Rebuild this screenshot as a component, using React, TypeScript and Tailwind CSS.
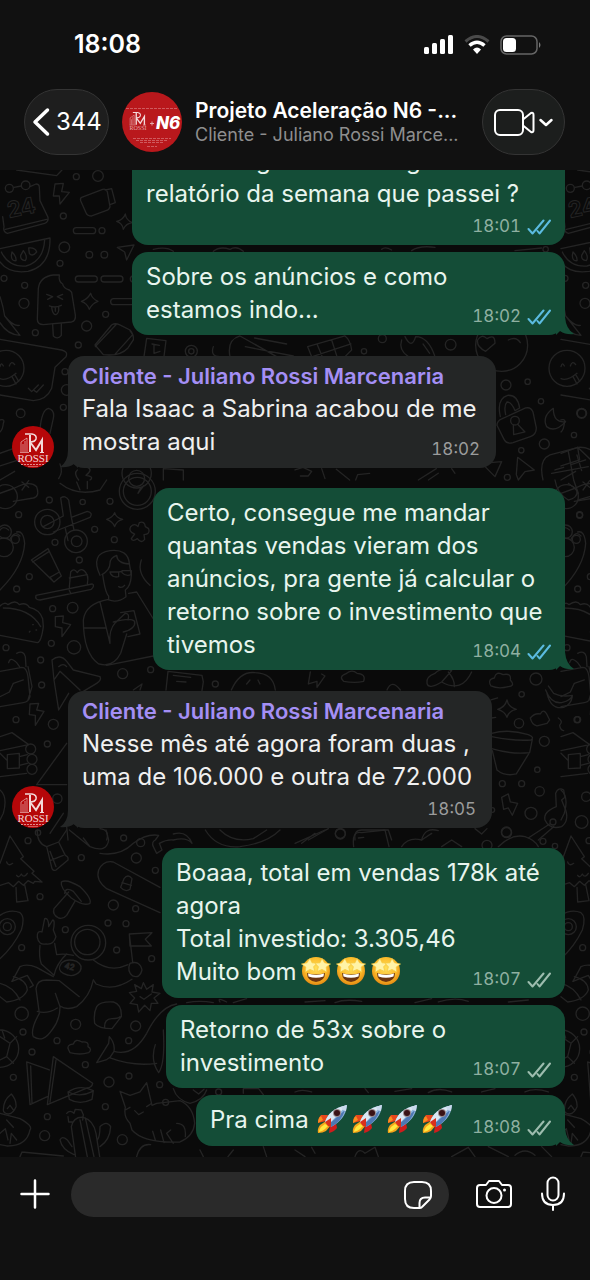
import type { ReactNode } from "react";

type Doodle = {
  x: number;
  y: number;
  dots: [number, number, number][];
  paths: string[];
};

type Message = {
  id: number;
  from: "me" | "client";
  lines: ReactNode[];
  time: string;
  status?: "read" | "delivered";
  // time goes on its own row instead of beside the last line
  timeBelow?: boolean;
  tail?: boolean;
  width: string;
  gap: string;
};

// wallpaper sketches, drawn at 3x
const DOODLES: Doodle[] = [
  {
    x: 0,
    y: 160,
    dots: [
      [229, 50, 9], [294, 48, 16], [190, 168, 9], [306, 212, 9], [193, 262, 16], [180, 310, 9],
      [268, 284, 10], [313, 284, 10], [12, 355, 9], [74, 376, 9], [72, 430, 15], [317, 463, 9],
      [260, 498, 15], [106, 518, 9], [235, 555, 9], [62, 760, 13], [190, 742, 9], [28, 85, 12],
      [77, 76, 13], [18, 625, 54], [574, 574, 18], [574, 574, 8], [410, 940, 44], [410, 955, 24],
      [195, 635, 9], [200, 690, 16],
    ],
    paths: [
      "M50 30L170 47L186 30",
      "M42 82L64 78M90 80L108 72Q118 72 118 82L120 122L144 172Q146 186 134 190L22 220Q8 216 12 200L8 170M16 208L140 178",
      "M165 72L190 70L185 95L208 97L180 132L178 108L160 108Z",
      "M245 112L308 88Q318 85 322 95L330 140Q328 150 318 152L275 168Q262 168 258 158L242 122Q240 114 245 112ZM316 90L335 86L346 128L330 134",
      "M376 162Q378 180 397 188Q378 190 370 208Q368 190 350 184Q370 180 376 162Z",
      "M229 203H278A9 9 0 0 1 278 221H229A9 9 0 0 1 229 203ZM235 348H283A9 9 0 0 1 283 366H235A9 9 0 0 1 235 348ZM312 348H360A9 9 0 0 1 360 366H312A9 9 0 0 1 312 348ZM400 348A9 9 0 0 0 400 366M400 416H341A9 9 0 0 0 341 434H400",
      "M0 266L150 234Q152 318 84 334Q26 342 0 306M134 240Q130 304 78 318Q26 322 4 276",
      "M36 276Q50 290 48 302Q34 304 34 286ZM70 272Q84 290 76 302Q60 300 62 286ZM86 264Q106 262 110 276Q96 292 88 280Z",
      "M352 262L402 255L380 300L374 276Z",
      "M112 478L115 385Q120 350 160 345L178 345Q175 365 188 372Q190 385 208 390L215 397L226 465Q228 482 215 486L130 494Q112 494 112 478ZM158 494L160 528Q172 540 184 526L184 492",
      "M140 403L158 410L143 418M188 403L172 410L188 418M148 438Q165 445 184 436M155 442Q158 465 168 464Q178 460 176 440M166 443V454",
      "M272 400Q276 416 294 424Q276 430 268 448Q262 430 244 424Q262 418 272 400Z",
      "M0 410Q10 440 14 468L60 526Q22 524 0 488M14 468Q40 500 58 496",
      "M285 555L335 495Q345 488 358 494L390 510Q402 524 400 540L384 564Q360 590 310 584ZM390 512L398 524L344 584M350 492L286 560",
      "M0 538L185 570Q205 575 198 590L165 622L155 685Q140 720 100 722L0 705",
      "M0 620Q4 604 10 618M28 618Q34 600 44 614M0 656Q20 664 48 640M36 650L48 672M44 644L56 664",
      "M85 685L95 695L115 675M103 692L110 697L130 675",
      "M432 590L440 535L498 542L492 590M456 552L478 556M462 554V580L480 574",
      "M120 808Q125 750 145 745Q165 750 160 775L150 820M0 780Q16 776 10 790Q8 810 0 816",
      "M0 880L50 862L56 900L0 918M50 862L90 900M0 960L44 934",
      "M180 912Q190 936 176 956M232 930Q220 940 236 960M262 922Q280 928 258 946Q284 950 270 960M490 960V926L550 930V960",
      "M640 560Q630 590 660 590M690 590Q680 540 720 528L830 590M736 560L880 588M764 534L860 552",
      "M460 268Q500 258 520 274M640 274Q660 258 690 268Q710 256 730 274",
    ],
  },
  {
    x: 295,
    y: 160,
    dots: [
      [467, 554, 16], [207, 574, 8], [262, 536, 12], [633, 675, 15], [698, 665, 8], [738, 724, 8],
      [860, 760, 15], [837, 825, 8], [748, 852, 15], [679, 871, 8], [637, 952, 9], [660, 782, 13],
      [620, 556, 78], [752, 268, 8],
    ],
    paths: [
      "M38 560L150 528Q166 540 170 570L150 590M38 560L50 590M66 552L82 590M110 540L126 590M52 590L168 552",
      "M320 540Q310 570 340 590M330 530Q350 570 362 530Q400 530 420 590M384 552L404 580",
      "M548 540Q560 520 576 536Q600 520 600 550L572 574Q544 560 548 540ZM640 540Q664 528 676 548",
      "M606 796Q606 782 622 776L692 744Q708 740 714 756L724 804Q724 824 706 830L654 848Q634 854 626 836ZM616 770Q604 716 638 706Q668 704 674 744L660 752Q650 726 636 726Q626 736 632 764",
      "M655 795L656 824L690 816L668 793",
      "M775 745Q740 770 755 800Q780 820 812 785Q775 790 775 745Z",
      "M744 960Q730 900 765 885L850 862Q880 860 900 880M846 885L860 932M828 914L872 900M780 930L806 922M820 874L836 960M770 940L880 920",
      "M668 892L718 930L690 935L670 960L664 944Z",
      "M560 910L620 905L600 950Z",
      "M0 930L24 922L50 934L40 948L16 948M80 926L90 956M124 928L164 960M182 960L188 944L224 940M370 960L424 926M400 960L430 940M470 926L480 940",
      "M260 268Q270 258 290 270M350 272Q372 256 420 262M660 272L740 264",
    ],
  },
  {
    x: 0,
    y: 480,
    dots: [
      [148, 60, 9], [248, 66, 8], [330, 64, 9], [56, 104, 9], [142, 126, 38], [142, 126, 20],
      [228, 184, 34], [230, 184, 16], [284, 148, 9], [165, 187, 9], [343, 179, 9], [238, 240, 9],
      [88, 290, 9], [50, 327, 9], [158, 386, 9], [218, 383, 16], [154, 490, 9], [222, 502, 20],
      [18, 503, 9], [122, 540, 9], [368, 581, 15], [452, 569, 9], [125, 615, 9], [48, 719, 9],
      [160, 733, 15], [142, 792, 9], [92, 807, 15], [96, 838, 15], [96, 868, 15], [412, 34, 54],
      [412, 34, 42], [14, 155, 20], [46, 178, 12], [12, 202, 28], [646, 612, 9], [172, 956, 14],
      [16, 50, 36], [114, 1058, 8], [136, 1008, 8],
    ],
    paths: [
      "M182 54Q196 44 206 60L214 112L262 94Q280 98 270 112L160 156M182 54L190 108L130 140M196 146L204 182M214 112L222 150",
      "M344 98Q348 114 368 118Q350 122 344 140Q338 124 320 118Q338 112 344 98Z",
      "M392 140Q404 128 414 140L418 128Q434 122 436 140L446 146Q452 162 432 164L434 178Q424 192 412 176Q398 186 394 176L404 162Q384 154 392 140Z",
      "M94 240L144 206L184 288L162 306ZM98 246L148 214M158 302L150 292L178 276",
      "M108 346L276 312Q286 316 274 328L120 360Q104 360 108 346ZM208 322L212 276Q222 262 232 278Q240 264 252 272Q268 284 262 312M208 294L262 284M206 326L212 340",
      "M300 286Q270 220 330 212Q384 206 388 250L394 286Q392 320 376 330L378 350M308 284Q316 340 326 348L326 360Q352 370 378 350M306 284Q330 270 330 250Q330 234 350 226Q352 250 388 252",
      "M330 276H356V290Q340 294 332 282ZM366 272H394V284Q376 290 366 278ZM356 276L366 274M356 320Q366 326 374 316",
      "M326 358Q256 370 250 420Q250 520 296 552Q340 564 362 520L380 462M252 444H316M300 366L330 490Q326 450 346 428L376 400Q390 400 384 420M386 340L410 336L462 420M362 398L402 392L420 462L384 470M340 426Q392 412 404 424Q408 446 370 456M320 556L460 528M424 240Q410 280 450 316",
      "M0 330Q70 260 74 190Q70 150 50 156M26 150Q10 136 0 150M30 178Q44 150 60 168",
      "M0 378Q14 364 24 374Q46 358 58 374Q78 366 88 382Q118 388 128 416L130 440Q124 486 112 488L0 466M10 384Q90 384 122 440M88 456L90 454M98 434L100 434M108 450L110 450",
      "M166 410L190 408L188 428L212 434L186 470L186 444L166 440Z",
      "M0 574L66 562Q80 562 84 590L90 650Q86 666 70 668L0 680M26 548Q30 528 50 548L60 562M50 520Q70 510 76 530L78 560M0 650L28 636L40 610L70 600M84 560L96 620L84 660",
      "M156 540Q180 520 200 544L220 570L300 590Q306 600 290 610L240 640M156 540L162 600L176 690L206 640M176 560Q190 548 200 560M162 600L180 574L240 630",
      "M90 672L116 670L110 690L132 694L106 736L106 706L88 704Z",
      "M0 770L36 758L86 794L0 812M22 824L58 820V864L22 866ZM0 820L20 840M58 830L82 824M58 856L82 850M0 890L80 880",
      "M110 914L200 790M110 914H200M400 630L426 612L420 630",
      "M498 630L504 574L606 586L610 606L606 632M520 586L572 592M530 604L558 606",
      "M694 630Q720 572 766 578Q820 580 826 630M740 612L750 600M780 612L774 600",
      "M0 40L44 24Q90 0 110 20Q120 50 100 54L40 64M66 6L86 22M86 2L66 30M180 10Q230 50 300 30L320 0M230 6L240 30M262 4L262 26M420 28L432 16L414 40Z",
      "M0 930Q24 950 10 1000L0 1020M190 1000L150 1060M200 1040L204 1080M300 1046Q330 1050 320 1080",
    ],
  },
  {
    x: 295,
    y: 480,
    dots: [
      [723, 597, 18], [680, 643, 8], [672, 730, 14], [848, 719, 9], [748, 784, 15], [727, 869, 8],
      [622, 911, 9], [680, 911, 9], [734, 934, 14], [708, 1000, 18], [860, 1026, 19], [874, 950, 14],
      [634, 1056, 15], [592, 990, 7], [854, 106, 9], [774, 1026, 9], [136, 1060, 15],
    ],
    paths: [
      "M46 576L40 612L66 604L66 622L90 588L80 582M146 604Q130 590 152 582Q170 566 186 580Q214 582 206 604Q180 610 146 604ZM276 630Q290 596 316 630",
      "M396 610Q392 590 420 580Q440 560 470 572L440 606Q400 630 396 610ZM440 606Q500 640 530 576M460 576Q480 600 478 620",
      "M588 618Q576 598 598 594Q604 572 624 584Q650 578 646 600Q662 618 640 620Q610 628 588 618Z",
      "M636 660Q640 682 664 688Q642 692 636 712Q630 694 608 688Q630 682 636 660ZM588 660L608 654M590 714L602 712",
      "M706 714Q720 698 736 702Q744 686 754 700L764 720L756 730L726 738Q710 734 706 714Z",
      "M752 630Q768 672 800 668Q830 660 832 646Q800 652 776 640L760 618M756 640Q768 690 806 682Q828 674 832 650",
      "M790 714Q806 724 794 736Q796 750 806 752",
      "M590 760Q640 746 700 764Q720 772 708 780Q660 784 590 770M590 806Q650 824 704 818L712 778M592 812L606 870Q630 890 664 882L702 820",
      "M620 952L640 942L646 966L668 970L652 1006L640 984L626 988Z",
      "M784 980L782 940Q790 920 806 930L810 952L800 960L808 980Q826 1020 800 1040Q764 1050 750 1020Q744 996 784 980ZM776 1040L730 1080M764 1032L700 1074",
      "M780 0Q786 40 820 60Q850 54 846 30L820 10M836 0L850 40M850 60L884 50",
      "M40 1080L100 1046M180 1080Q176 1050 200 1050H280L290 1080M380 1080Q390 1040 430 1052M540 1046L560 1062L576 1046",
    ],
  },
  {
    x: 0,
    y: 830,
    dots: [
      [84, 32, 9], [244, 83, 9], [371, 24, 9], [422, 38, 12], [409, 84, 15], [466, 121, 9],
      [120, 200, 9], [340, 225, 15], [407, 236, 9], [324, 279, 9], [378, 281, 9], [196, 299, 9],
      [22, 290, 24], [22, 290, 12], [65, 353, 9], [350, 360, 9], [455, 386, 9], [65, 551, 20],
      [227, 583, 15], [407, 588, 15], [69, 606, 9], [171, 632, 9], [386, 632, 9], [96, 666, 9],
      [256, 704, 9], [40, 742, 9], [327, 756, 15], [387, 738, 9], [479, 764, 9], [316, 830, 9],
      [142, 860, 9], [134, 917, 15], [367, 929, 15], [497, 817, 9], [265, 338, 52], [262, 336, 38],
      [0, 656, 56], [656, 786, 9],
    ],
    paths: [
      "M30 18L70 80L62 86L102 124L96 130L126 156L104 154L100 160L84 152L70 166L56 154L40 170L26 158L0 166M30 18L0 100M48 172L50 216L84 212L74 164M20 96Q24 110 38 100M50 136Q56 146 64 132Q72 146 82 130",
      "M112 0Q110 40 140 50L156 116Q160 124 168 120L204 90Q206 80 196 76L176 36M140 50L176 36L200 0M150 92L190 76M150 64L168 110",
      "M208 0L270 50Q320 70 326 30L318 0M270 50L250 24M300 70Q360 80 400 40Q440 10 476 16L466 30Q454 36 460 50L470 70L486 60L478 40Q500 28 520 30Q560 20 576 40Q560 0 520 12",
      "M480 172L340 96Q310 90 296 120Q286 150 320 176L480 248M372 146Q384 130 396 146L390 178Q376 188 362 172ZM366 158L394 166",
      "M184 156Q200 146 240 170Q276 204 270 220Q250 230 214 204Q180 174 184 156ZM206 186L162 236Q156 254 176 264Q190 268 200 256L226 212M194 190Q196 170 220 184L244 214",
      "M0 256Q30 236 60 248Q76 260 64 300Q40 350 0 386",
      "M112 322Q110 300 126 306L134 266Q146 262 146 290L158 270Q166 270 160 300L168 320Q160 346 138 342Q116 346 112 322ZM120 346Q116 380 124 402L162 436Q170 400 200 372M164 340L170 374Q190 370 220 376M36 454L60 410Q80 400 110 412L160 440",
      "M184 400Q200 384 230 394Q250 406 240 424Q220 446 190 430Q170 420 184 400ZM280 390Q330 430 384 404M280 450L288 462Q340 486 396 448",
      "M388 312L456 308L436 328L454 348L390 348ZM388 312L398 396M390 400Q420 390 426 420Q420 446 398 438Q380 424 390 400",
      "M108 476Q110 450 140 450L178 452L238 500M108 476L118 550Q90 600 100 620Q130 640 156 600Q180 570 180 530L166 490M112 544Q140 554 172 534M280 450Q270 500 230 530Q200 542 180 528M36 454L82 436L100 466L90 472M40 440Q80 450 82 480Q70 510 20 516L0 500M0 460Q40 470 60 510",
      "M430 458L440 478L460 464L456 486L480 490L462 504L474 520L454 520L450 542L434 526L416 546L412 524L390 520L404 504L388 488L410 484L404 464L424 476ZM420 500L432 508L454 492",
      "M290 530Q300 514 340 516Q366 524 364 560L336 596Q296 596 284 580Q280 550 290 530ZM314 594Q312 566 336 566Q356 566 360 560",
      "M206 660Q198 644 220 642Q226 624 246 636Q268 634 264 650Q278 658 266 668Q240 676 210 668Z",
      "M0 620L30 640L20 680L0 690M30 640L50 620M20 680L40 700M6 600L14 624",
      "M290 698L326 640L328 620Q346 640 342 664L330 682L318 690ZM342 664Q400 680 440 610Q480 530 530 522M330 684Q400 710 470 700M466 644Q450 690 476 728Q496 700 490 600",
      "M80 696L90 824L142 800M80 696L148 720M92 708L96 820M160 680L278 760Q276 772 262 774L142 824L160 680ZM150 816L168 690",
      "M204 786Q240 762 280 782L276 808Q240 826 208 808ZM204 786Q240 804 278 784",
      "M10 840Q10 810 34 792Q50 810 48 830Q40 850 26 852Q10 850 10 840ZM22 836L30 826L40 840M0 850L60 866Q100 888 90 900Q80 950 20 948L0 944M20 870L40 892M0 910L16 896L24 930M30 940L34 910L50 930",
      "M360 784L376 832Q370 860 390 880L396 900Q430 940 540 936Q580 920 584 880Q580 830 540 812L470 820L456 826L440 758L420 786L390 796ZM376 840L390 832M430 846L416 854L404 842M440 830L452 822M458 904L466 930M482 900L492 938M512 900L500 910L520 940M530 880Q560 880 556 920M452 944Q420 940 410 980",
      "M200 850Q210 838 222 850L226 838L244 840L250 854L248 870M228 990L214 890Q220 860 250 862Q280 870 288 910L300 986M240 870L262 980M256 864L282 980M204 860L206 876L216 876M180 930Q186 916 202 930L216 950M180 930Q186 960 222 974M292 930Q300 920 300 890Q320 870 332 890Q330 930 300 950",
      "M66 966L190 978M66 966L60 980M520 776Q530 810 570 820Q610 810 620 780M580 780L596 792L612 778M730 790V776L776 776L790 794M600 960L610 980M700 960L684 980M790 950L800 980",
      "M560 518Q600 510 640 518M660 516Q650 500 680 516M700 518L740 506M616 0Q650 56 720 50Q800 40 840 0M660 0Q700 40 760 26L800 0",
    ],
  },
  {
    x: 295,
    y: 830,
    dots: [[136, 12, 15], [576, 46, 15], [635, 8, 15], [744, 34, 9], [780, 48, 8]],
    paths: [
      "M0 40L90 0M20 40L60 10M176 50Q170 0 200 8L270 0L282 50M190 24L206 22M320 50Q340 20 380 30L410 10M440 50L470 30L500 50M610 50Q650 10 690 20Q720 30 730 50",
      "M30 516L90 512M120 518Q150 506 200 514M360 518L410 506M430 516Q480 500 520 514M640 516L700 510",
      "M0 786Q20 776 50 786M210 776L220 788M300 784L350 776M400 788Q430 770 470 786M560 786L600 776M690 786Q720 772 760 786",
      "M0 960L30 980M60 970L50 952M180 980Q190 950 210 970L240 952L250 980M470 980L520 952L540 980M580 950L640 980M660 976Q690 950 720 976M740 950L770 980",
    ],
  },
];

const MESSAGES: Message[] = [
  {
    id: 1,
    from: "me",
    lines: ["Ele conseguiu avaliar agora o", "relatório da semana que passei ?"],
    time: "18:01",
    status: "read",
    timeBelow: true,
    width: "w-[433px]",
    gap: "mt-0",
  },
  {
    id: 2,
    from: "me",
    lines: ["Sobre os anúncios e como", "estamos indo..."],
    time: "18:02",
    status: "read",
    tail: true,
    width: "w-[433px]",
    gap: "mt-[7px]",
  },
  {
    id: 3,
    from: "client",
    lines: ["Fala Isaac a Sabrina acabou de me", "mostra aqui"],
    time: "18:02",
    width: "w-[428px]",
    gap: "mt-[21px]",
  },
  {
    id: 4,
    from: "me",
    lines: [
      "Certo, consegue me mandar",
      "quantas vendas vieram dos",
      "anúncios, pra gente já calcular o",
      "retorno sobre o investimento que",
      "tivemos",
    ],
    time: "18:04",
    status: "read",
    tail: true,
    width: "w-[412px]",
    gap: "mt-5",
  },
  {
    id: 5,
    from: "client",
    lines: ["Nesse mês até agora foram duas ,", "uma de 106.000 e outra de 72.000"],
    time: "18:05",
    timeBelow: true,
    width: "w-[424px]",
    gap: "mt-[21px]",
  },
  {
    id: 6,
    from: "me",
    lines: [
      "Boaaa, total em vendas 178k até",
      "agora",
      "Total investido: 3.305,46",
      <>
        Muito bom
        <EmojiRow kind="star" count={3} />
      </>,
    ],
    time: "18:07",
    status: "delivered",
    width: "w-[403px]",
    gap: "mt-5",
  },
  {
    id: 7,
    from: "me",
    lines: ["Retorno de 53x sobre o", "investimento"],
    time: "18:07",
    status: "delivered",
    width: "w-[399px]",
    gap: "mt-[7px]",
  },
  {
    id: 8,
    from: "me",
    lines: [
      <>
        Pra cima <EmojiRow kind="rocket" count={4} />
      </>,
    ],
    time: "18:08",
    status: "delivered",
    tail: true,
    width: "w-[369px]",
    gap: "mt-[7px]",
  },
];

function StarStruck() {
  return (
    <svg viewBox="0 0 30 30" className="h-[30px] w-[30px]" role="img" aria-label="🤩">
      <defs>
        <radialGradient id="face" cx="50%" cy="40%" r="60%">
          <stop offset="0" stopColor="#ffe15a" />
          <stop offset="0.65" stopColor="#fbb928" />
          <stop offset="1" stopColor="#e48a13" />
        </radialGradient>
      </defs>
      <circle cx="15" cy="15" r="14" fill="url(#face)" />
      <path d="M6 17Q15 20 24 17Q24 25 15 26Q6 25 6 17Z" fill="#6b3410" />
      <path d="M7 17.600Q15 20.500 23 17.600L22.500 20.500Q15 23 7.500 20.500Z" fill="#fff" />
      <path
        d="M9 2.500L11 6.800L16 7.200L12.600 10.800L13.800 15.500L9 13.400L4.300 16L4.800 11L0.500 8L6 6.800Z"
        fill="#fff3a6"
        stroke="#f7c83c"
        strokeWidth="0.700"
      />
      <path
        d="M21 2.500L23.500 6.800L29.500 8L25.200 11L25.700 16L21 13.400L16.200 15.500L17.400 10.800L14 7.200L19 6.800Z"
        fill="#fff3a6"
        stroke="#f7c83c"
        strokeWidth="0.700"
      />
    </svg>
  );
}

function Rocket() {
  return (
    <svg viewBox="0 0 32 30" className="h-[30px] w-8" role="img" aria-label="🚀">
      <path d="M11 11L4 11Q1 14 1 19L9 17Z" fill="#e8461c" />
      <path d="M4 12Q1 14 1 19L6 16Z" fill="#f98d1f" />
      <path d="M19 19L20 24Q17 28 12 29L13 21Z" fill="#cf1d1d" />
      <path d="M9 17L3 21Q0 25 1 29Q6 29 9 27L14 21Z" fill="#f6a31a" />
      <path d="M8 20L4 23Q2 26 2 28Q6 27 8 25L11 22Z" fill="#ffe93f" />
      <path d="M8 18Q12 5 30 1Q29 15 14 23Z" fill="#8fb4dc" />
      <path d="M8 18Q12 5 30 1L12 20Z" fill="#dbe7f3" />
      <path d="M11 21L28 6Q25 17 14 23Z" fill="#4d78b4" />
      <path d="M24 3L30 1L29 7Q26 7 24 3Z" fill="#c9d9ec" />
      <circle cx="20" cy="9" r="4" fill="#9a8a8c" />
      <circle cx="20" cy="9" r="3" fill="#3a1216" />
      <path d="M8 18L14 14L14 23L11 22Z" fill="#d9301c" />
    </svg>
  );
}

function EmojiRow({ kind, count }: { kind: "star" | "rocket"; count: number }) {
  return (
    <span className={`inline-flex h-[34px] items-start align-middle ${kind === "star" ? "gap-[5px] pl-1" : "gap-[3px] pl-0.5"}`}>
      {Array.from({ length: count }, (_, i) => (kind === "star" ? <StarStruck key={i} /> : <Rocket key={i} />))}
    </span>
  );
}

function Wallpaper() {
  return (
    <svg
      className="absolute bottom-0 left-0 h-[988px] w-full"
      viewBox="0 169 590 988"
      preserveAspectRatio="xMinYMin slice"
      aria-hidden="true"
    >
      <g id="doodles" fill="none" stroke="#242424" strokeLinejoin="round" strokeLinecap="round">
        {DOODLES.map((d, i) => (
          <g key={i} transform={`translate(${d.x} ${d.y}) scale(0.3333)`} strokeWidth="4">
            {d.dots.map(([cx, cy, r], n) => (
              <circle key={n} cx={cx} cy={cy} r={r} />
            ))}
            {d.paths.map((p) => (
              <path key={p} d={p} />
            ))}
          </g>
        ))}
        <text x="9" y="218" fontSize="22" fontWeight="700" transform="rotate(-12 9 218)" fontFamily="Inter, sans-serif">
          24
        </text>
        <text x="64" y="968" fontSize="8" transform="rotate(14 64 968)" fontFamily="Inter, sans-serif">
          42
        </text>
      </g>
      <use href="#doodles" x="561" />
    </svg>
  );
}

function Checks({ read }: { read: boolean }) {
  return (
    <svg viewBox="0 0 24 16" className={`h-4 w-6 ${read ? "text-[#5bbbe0]" : "text-[#9dbcae]"}`} role="img" aria-label={read ? "Lida" : "Entregue"}>
      <path
        d="M1.500 10L5.500 14.500L16.500 1.500M10.500 12L12.500 14.500L23 1.500"
        fill="none"
        stroke="currentColor"
        strokeWidth="2"
        strokeLinecap="round"
        strokeLinejoin="round"
      />
    </svg>
  );
}

function RossiMark() {
  return (
    <g fill="none" stroke="#f3d9d9">
      <path d="M9 26V16L15 12V26M11 26V18M13 26V15M8 26.500H17" strokeWidth="1" opacity="0.600" />
      <path d="M13 8H20Q25 9 24 13Q23 16 18 16" strokeWidth="1.600" />
      <path d="M18 9V26M18 16L24 24L30 14V26" strokeWidth="2" />
      <path d="M28 26.500H32" strokeWidth="1" />
    </g>
  );
}

function ClientAvatar() {
  return (
    <svg viewBox="0 0 42 42" className="h-[42px] w-[42px] shrink-0" role="img" aria-label="Rossi Marcenaria">
      <circle cx="21" cy="21" r="21" fill="#b50709" />
      <RossiMark />
      <text x="21" y="36" textAnchor="middle" fontSize="11" fill="#f3d9d9" fontFamily="Liberation Serif, serif">
        ROSSI
      </text>
      <path d="M9 38.500H33" stroke="#e08b8b" strokeWidth="1" strokeDasharray="2 1" />
      <path d="M16 40.500H26" stroke="#d15a5a" strokeWidth="1" />
    </svg>
  );
}

function GroupAvatar() {
  return (
    <svg viewBox="0 0 60 60" className="h-[60px] w-[60px] shrink-0" role="img" aria-label="Grupo">
      <circle cx="30" cy="30" r="30" fill="#b9181c" />
      <path d="M4 16.500H56" stroke="#d9777a" strokeWidth="1" strokeDasharray="3 1" opacity="0.700" />
      <g transform="translate(2 15) scale(0.68)">
        <RossiMark />
      </g>
      <text x="16" y="38" textAnchor="middle" fontSize="6" fill="#e3a9aa" fontFamily="Liberation Serif, serif">
        ROSSI
      </text>
      <path d="M28 31.500H32M30 29.500V33.500" stroke="#e3a9aa" strokeWidth="1" />
      <text x="34" y="37" fontSize="17" fontWeight="800" fontStyle="italic" fill="#fff" fontFamily="Inter, sans-serif">
        N6
      </text>
      <path
        d="M11 46.500H49M14 48.500H46M18 50.500H42M25 54.500H35"
        stroke="#d9777a"
        strokeWidth="1"
        strokeDasharray="3 1"
        opacity="0.700"
      />
    </svg>
  );
}

function Bubble({ m }: { m: Message }) {
  const mine = m.from === "me";
  return (
    <div className={`flex shrink-0 items-end ${m.gap} ${mine ? "justify-end pr-[25px]" : "pl-3"}`}>
      {!mine && <ClientAvatar />}
      <div
        className={`relative flex max-w-full flex-col rounded-2xl pt-2 pb-1.5 pl-3.5 ${m.width} ${
          mine ? "bg-[#144d37] pr-3.5 text-[#e8f5ee]" : "ml-[14px] bg-[#242626] pr-4 text-[#f0f0f0]"
        }`}
      >
        {m.tail && (
          <svg viewBox="0 0 18 22" className="absolute -right-[9px] bottom-0 h-[22px] w-[18px]" aria-hidden="true">
            <path d="M0 0H9V4Q10 16 18 21Q10 22 4 18L0 22Z" fill="#144d37" />
          </svg>
        )}
        {!mine && (
          <svg viewBox="0 0 18 22" className="absolute -left-[8px] bottom-0 h-[22px] w-[18px]" aria-hidden="true">
            <path d="M18 0H8V4Q8 16 0 21Q8 22 14 18L18 22Z" fill="#242626" />
          </svg>
        )}
        {!mine && (
          <div className="relative h-7 text-[22px] leading-6 font-semibold whitespace-nowrap text-[#a48ff5]">
            Cliente - Juliano Rossi Marcenaria
          </div>
        )}
        <div className={`relative text-[24px] leading-[33px] whitespace-nowrap ${mine ? "pb-[3px]" : "pb-1"}`}>
          {m.lines.map((line, i) => (
            <p key={i} className={typeof line === "string" ? "h-[33px]" : "h-[34px]"}>
              {line}
            </p>
          ))}
        </div>
        <div
          className={`relative flex h-6 items-center gap-1.5 self-end text-[17px] tabular-nums ${
            m.timeBelow ? (mine ? "mt-0.5" : "mt-px") : "-mt-6"
          } ${mine ? "text-[#8fb0a1]" : "text-[#9b9c9c]"}`}
        >
          <time>{m.time}</time>
          {m.status && <Checks read={m.status === "read"} />}
        </div>
      </div>
    </div>
  );
}

function StatusBar() {
  return (
    <div className="flex h-[89px] items-center justify-between pr-12 pl-[74px] text-white">
      <span className="text-[25px] font-semibold">18:08</span>
      <div className="flex items-center gap-2.5">
        <svg viewBox="0 0 30 20" className="h-5 w-[30px]" fill="currentColor" aria-hidden="true">
          <rect x="0" y="12" width="5" height="7" rx="1.500" />
          <rect x="8" y="8" width="5" height="11" rx="1.500" />
          <rect x="16" y="4" width="5" height="15" rx="1.500" />
          <rect x="24" y="0" width="5" height="19" rx="1.500" />
        </svg>
        <svg viewBox="0 0 26 20" className="h-5 w-[26px]" aria-hidden="true">
          <path d="M1.500 6.500Q13 -3.500 24.500 6.500" fill="none" stroke="#4a4a4a" strokeWidth="3" />
          <path d="M5.500 10.500Q13 4 20.500 10.500" fill="none" stroke="#fff" strokeWidth="3.500" />
          <path d="M9 14.500Q13 10.500 17 14.500L13 19Z" fill="#fff" />
        </svg>
        <svg viewBox="0 0 42 20" className="h-5 w-[42px]" aria-hidden="true">
          <rect x="1" y="1" width="36" height="18" rx="5.500" fill="none" stroke="#666" strokeWidth="1.500" />
          <rect x="3" y="3" width="13" height="14" rx="3.500" fill="#fff" />
          <path d="M39 7Q42 10 39 13Z" fill="#777" />
        </svg>
      </div>
    </div>
  );
}

export default function App() {
  return (
    <div className="flex h-screen flex-col overflow-hidden bg-[#0a0a0a] font-['Inter','Noto_Sans',sans-serif]">
      <header className="relative z-10 shrink-0 bg-[#111111]">
        <StatusBar />
        <div className="flex h-[81px] items-start pr-[25px] pl-6">
          <button
            type="button"
            aria-label="Voltar, 344 conversas"
            className="flex h-[66px] w-[85px] shrink-0 items-center gap-1.5 rounded-full border border-[#343434] bg-[#1e1e1e] pl-[7px] text-[24px] text-white"
          >
            <svg viewBox="0 0 18 30" className="h-[30px] w-[18px] shrink-0" fill="none" stroke="currentColor" strokeWidth="3.500" strokeLinecap="round" strokeLinejoin="round" aria-hidden="true">
              <path d="M15.500 3L3 15L15.500 27" />
            </svg>
            344
          </button>
          <div className="ml-[13px] flex h-[66px] min-w-0 flex-1 items-center gap-[13px]">
            <GroupAvatar />
            <div className="min-w-0 pt-px">
              <h1 className="text-[21px] leading-6 font-semibold whitespace-nowrap text-white">Projeto Aceleração N6 -...</h1>
              <p className="text-[18px] leading-[23px] whitespace-nowrap text-[#8e8e8e]">Cliente - Juliano Rossi Marce...</p>
            </div>
          </div>
          <button
            type="button"
            aria-label="Chamada de vídeo"
            className="flex h-[66px] w-[83px] shrink-0 items-center justify-center rounded-full border border-[#343434] bg-[#1c1e1d] text-white"
          >
            <svg viewBox="0 0 60 30" className="h-[30px] w-[60px]" fill="none" stroke="currentColor" strokeWidth="2" strokeLinecap="round" strokeLinejoin="round" aria-hidden="true">
              <rect x="1" y="3" width="28" height="25" rx="5" />
              <path d="M29 12.500L37 6Q39.500 5 39.500 8V23Q39.500 26 37 25L29 18.500" />
              <path d="M46.500 13L52 18L57.500 13" strokeWidth="2.500" />
            </svg>
          </button>
        </div>
      </header>

      <main className="relative flex min-h-0 flex-1 flex-col justify-end overflow-hidden pb-[11px]">
        <Wallpaper />
        <div className="relative flex flex-col">
          {MESSAGES.map((m) => (
            <Bubble key={m.id} m={m} />
          ))}
        </div>
      </main>

      <footer className="relative flex h-[123px] shrink-0 items-start bg-[#111111] pt-[15px] pr-6 pl-5 text-white">
        <button type="button" aria-label="Anexar" className="flex h-[43px] w-[30px] shrink-0 items-center">
          <svg viewBox="0 0 30 30" className="h-[30px] w-[30px]" stroke="currentColor" strokeWidth="2.500" strokeLinecap="round" aria-hidden="true">
            <path d="M1.500 15H28.500M15 1.500V28.500" />
          </svg>
        </button>
        <div className="ml-[21px] flex h-[45px] min-w-0 flex-1 items-center rounded-full bg-[#2a2a2a] pr-4 pl-5">
          <input type="text" aria-label="Mensagem" className="min-w-0 flex-1 bg-transparent text-[24px] outline-none" />
          <button type="button" aria-label="Figurinhas">
            <svg viewBox="0 0 30 30" className="h-[30px] w-[30px]" fill="none" stroke="currentColor" strokeWidth="2" strokeLinejoin="round" aria-hidden="true">
              <path d="M17 28H11Q2 28 2 19V11Q2 2 11 2H19Q28 2 28 11V16Q28 18 26.500 19.500L19.500 26.500Q18.500 28 17 28ZM16.500 28V23Q16.500 17.500 22 17.500H28" />
            </svg>
          </button>
        </div>
        <button type="button" aria-label="Câmera" className="ml-[27px] flex h-[43px] shrink-0 items-center">
          <svg viewBox="0 0 36 30" className="h-[30px] w-9" fill="none" stroke="currentColor" strokeWidth="2" strokeLinejoin="round" aria-hidden="true">
            <path d="M4 6H10L13 2H23L26 6H32Q35 6 35 9V25Q35 28 32 28H4Q1 28 1 25V9Q1 6 4 6Z" />
            <circle cx="18" cy="16.500" r="7.500" />
            <circle cx="28.500" cy="11" r="1.500" fill="currentColor" stroke="none" />
          </svg>
        </button>
        <button type="button" aria-label="Gravar áudio" className="ml-7 flex h-[43px] shrink-0 items-center">
          <svg viewBox="0 0 26 36" className="h-9 w-[26px]" fill="none" stroke="currentColor" strokeWidth="2" strokeLinecap="round" aria-hidden="true">
            <rect x="7.500" y="1.500" width="11" height="23" rx="5.500" />
            <path d="M2 17.500Q2 29 13 29Q24 29 24 17.500M13 29V34" />
          </svg>
        </button>
      </footer>
    </div>
  );
}
